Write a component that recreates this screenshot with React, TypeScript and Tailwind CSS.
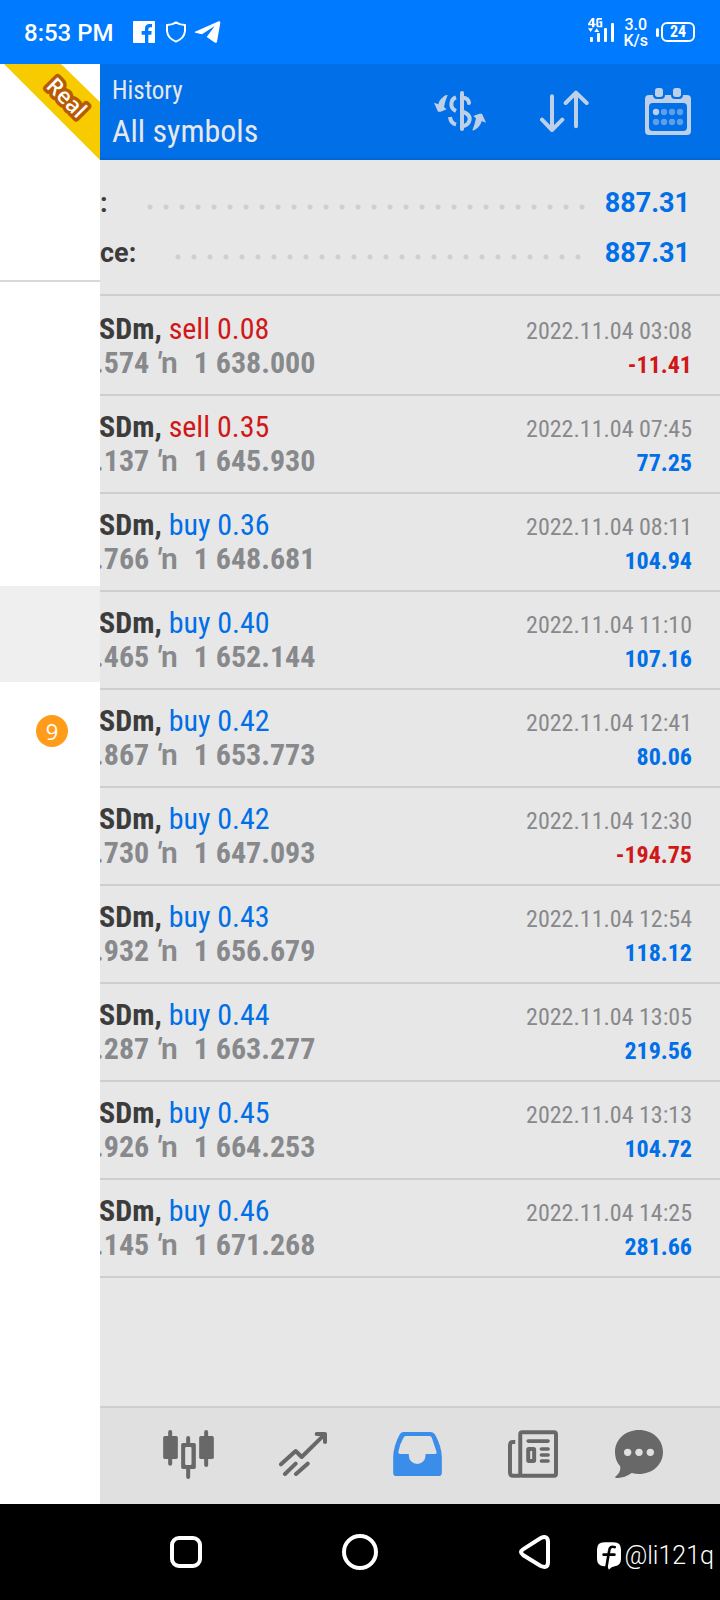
import React from "react";

type Deal = {
  side: "buy" | "sell";
  volume: string;
  open: string;
  close: string;
  time: string;
  profit: string;
};

const deals: Deal[] = [
  { side: "sell", volume: "0.08", open: ".574", close: "1 638.000", time: "2022.11.04 03:08", profit: "-11.41" },
  { side: "sell", volume: "0.35", open: ".137", close: "1 645.930", time: "2022.11.04 07:45", profit: "77.25" },
  { side: "buy", volume: "0.36", open: ".766", close: "1 648.681", time: "2022.11.04 08:11", profit: "104.94" },
  { side: "buy", volume: "0.40", open: ".465", close: "1 652.144", time: "2022.11.04 11:10", profit: "107.16" },
  { side: "buy", volume: "0.42", open: ".867", close: "1 653.773", time: "2022.11.04 12:41", profit: "80.06" },
  { side: "buy", volume: "0.42", open: ".730", close: "1 647.093", time: "2022.11.04 12:30", profit: "-194.75" },
  { side: "buy", volume: "0.43", open: ".932", close: "1 656.679", time: "2022.11.04 12:54", profit: "118.12" },
  { side: "buy", volume: "0.44", open: ".287", close: "1 663.277", time: "2022.11.04 13:05", profit: "219.56" },
  { side: "buy", volume: "0.45", open: ".926", close: "1 664.253", time: "2022.11.04 13:13", profit: "104.72" },
  { side: "buy", volume: "0.46", open: ".145", close: "1 671.268", time: "2022.11.04 14:25", profit: "281.66" },
];

function StatusBar() {
  return (
    <div className="flex h-16 items-center bg-[#007aff] pr-[25px] pl-6 text-white">
      <span className="pt-px text-2xl font-medium">8:53 PM</span>
      <svg className="ml-[19px] h-[22px] w-[22px]" viewBox="0 0 66 66" aria-hidden="true">
        <rect width="66" height="66" rx="2" fill="#fff" />
        <path d="M36 66V41H26V30H36V23Q36 9 50 9H57V19H52Q46 19 46 25V30H56L55 41H46V66Z" fill="#007aff" />
      </svg>
      <svg className="ml-[11px] h-[22px] w-5" viewBox="0 0 60 66" fill="none" stroke="#fff" strokeWidth="6" aria-hidden="true">
        <path d="M30 4Q42 12 57 12V30Q55 52 30 62Q5 52 3 30V12Q18 12 30 4Z" strokeLinejoin="round" />
      </svg>
      <svg className="ml-2 h-6 w-[27px]" viewBox="0 0 81 72" fill="#fff" aria-hidden="true">
        <path d="M3 35L74 4Q79 2 79 8L69 65Q67 71 61 67L38 51L62 18L24 43L4 38Q0 37 3 35Z" />
      </svg>
      <div className="ml-auto flex items-center">
        <svg className="mb-1 h-6 w-[27px]" viewBox="0 0 81 72" fill="#fff" aria-label="4G signal">
          <path d="M12 0H19V17H23V22H19V28H12V22H0V17ZM12 8L6 17H12Z" fillRule="evenodd" />
          <path d="M28 0H42V5H31V23H37V15H34V10H43V28H28L25 24V4Z" />
          <path d="M0 31H15L8 42ZM19 42H34L26 31Z" />
          <rect x="6" y="57" width="9" height="15" rx="3" />
          <rect x="27" y="45" width="9" height="27" rx="3" />
          <rect x="48" y="30" width="9" height="42" rx="3" />
          <rect x="69" y="15" width="9" height="57" rx="3" />
        </svg>
        <div className="ml-2 pt-px text-center text-base leading-4 font-medium">
          <div>3.0</div>
          <div>K/s</div>
        </div>
        <span className="ml-2 h-[9px] w-[3px] rounded-sm bg-white" />
        <span className="ml-[2px] flex h-5 w-[34px] items-center justify-center rounded-[6px] border-2 border-white font-['Roboto_Condensed',Roboto,sans-serif] text-base leading-none font-bold">
          24
        </span>
      </div>
    </div>
  );
}

function Drawer() {
  return (
    <aside className="w-[100px] shrink-0 bg-white">
      <div className="h-[218px] border-b-2 border-[#d8d8d8]">
        <svg className="h-24 w-[100px]" viewBox="0 0 100 96">
          <path d="M4 0H61L100 38V96Z" fill="#f8cb00" />
          <text
            transform="translate(45 23) rotate(45)"
            className="font-['Open_Sans','Noto_Sans',sans-serif] text-[22px] font-semibold [paint-order:stroke]"
            fill="#fff"
            stroke="#b85a00"
            strokeWidth="7"
            strokeLinejoin="round"
          >
            Real
          </text>
        </svg>
      </div>
      <nav className="pt-4">
        <div className="h-24" />
        <div className="h-24" />
        <div className="h-24" />
        <div className="h-24 bg-[#efefef]" />
        <div className="flex h-24 items-center justify-end pt-0.5 pr-8">
          <span className="flex h-8 w-8 items-center justify-center rounded-full bg-[#ff9c1a] font-['Open_Sans','Noto_Sans',sans-serif] text-[22px] leading-none font-medium text-white">
            9
          </span>
        </div>
      </nav>
    </aside>
  );
}

function CurrencyIcon() {
  const arrow = "M0 35L12 62H20L38 55L30 48Q34 28 41 12Q35 11 30 16Q15 27 13 40Z";
  return (
    <svg className="h-10 w-[52px]" viewBox="0 0 156 120" aria-hidden="true">
      <g fill="#bdd0e8">
        <path d={arrow} />
        <path d={arrow} transform="rotate(180 78 65)" />
      </g>
      <g fill="none" stroke="#bdd0e8" strokeWidth="12">
        <path d="M84 6V114" strokeLinecap="round" />
        <path d="M66 19Q52 24 52 40Q52 54 66 60" />
        <path d="M48 78Q50 96 66 101" />
        <path d="M88 20Q104 22 105 36" strokeLinecap="round" />
        <path d="M88 63Q108 70 107 86Q104 102 88 105" />
      </g>
    </svg>
  );
}

function SortIcon() {
  return (
    <svg className="h-[43px] w-[49px]" viewBox="0 0 147 129" fill="none" stroke="#bdd0e8" strokeWidth="12" strokeLinecap="round" strokeLinejoin="round" aria-hidden="true">
      <path d="M36 19V120M6 89L36 120L67 89M108 8V109M77 39L108 8L140 39" />
    </svg>
  );
}

function CalendarIcon() {
  return (
    <svg className="h-[47px] w-[46px]" viewBox="0 0 138 141" fill="#bdd0e8" aria-hidden="true">
      <rect y="21" width="138" height="120" rx="12" />
      <rect x="24" y="-6" width="36" height="39" rx="12" fill="#006fe8" />
      <rect x="78" y="-6" width="36" height="39" rx="12" fill="#006fe8" />
      <rect x="30" width="24" height="27" rx="8" />
      <rect x="84" width="24" height="27" rx="8" />
      <rect x="12" y="45" width="114" height="84" rx="11" fill="#006fe8" />
      <circle cx="33" cy="72" r="9.5" />
      <g fill="#5e9fe8">
        <circle cx="57" cy="72" r="9.5" />
        <circle cx="81" cy="72" r="9.5" />
        <circle cx="105" cy="72" r="9.5" />
        <circle cx="33" cy="102" r="9.5" />
        <circle cx="57" cy="102" r="9.5" />
        <circle cx="81" cy="102" r="9.5" />
        <circle cx="105" cy="102" r="9.5" />
      </g>
    </svg>
  );
}

function Header() {
  return (
    <header className="flex h-24 items-center border-b-2 border-[#0066d6] bg-[#006fe8] pl-3 text-[#e6e8ea]">
      <div className="flex-1 pt-2 whitespace-nowrap">
        <div className="text-[25px] leading-8">History</div>
        <h1 className="text-[32px] leading-[48px]">All symbols</h1>
      </div>
      <button className="flex w-26 justify-center" aria-label="Currency"><CurrencyIcon /></button>
      <button className="flex w-26 justify-center" aria-label="Sort"><SortIcon /></button>
      <button className="flex w-26 justify-center" aria-label="Period"><CalendarIcon /></button>
    </header>
  );
}

function SummaryRow({ label, value }: { label: string; value: string }) {
  return (
    <div className="flex h-[50px] items-center font-[Roboto,sans-serif] text-[27px] font-bold">
      <dt className="text-[#3c3c3c]">{label}</dt>
      <span className="mt-2 mr-4 ml-[34px] h-[6px] flex-1 bg-[radial-gradient(circle,#cfcfcf_2px,transparent_3px)] bg-[length:16px_6px] bg-repeat-x" />
      <dd className="text-[#006fe8]">{value}</dd>
    </div>
  );
}

function DealRow({ deal }: { deal: Deal }) {
  return (
    <li className="flex h-[98px] items-start justify-between border-b-2 border-[#cecece] pt-[14px] pr-7 whitespace-nowrap">
      <div className="-ml-px text-[30px] leading-[34px]">
        <div>
          <span className="font-bold text-[#3c3c3c]">SDm,</span>{" "}
          <span className={deal.side === "sell" ? "text-[#d01818]" : "text-[#006fe8]"}>
            {deal.side} {deal.volume}
          </span>
        </div>
        <div className="-ml-1 font-bold text-[#88898c]">
          {deal.open} <span className="font-[Roboto,sans-serif] font-semibold"><i>′</i>n</span>
          <span className="ml-4">{deal.close}</span>
        </div>
      </div>
      <div className="pt-0.5 text-right text-[24px] leading-[34px]">
        <div className="text-[#88898c]">{deal.time}</div>
        <div className={deal.profit.startsWith("-") ? "font-bold text-[#d01818]" : "font-bold text-[#006fe8]"}>{deal.profit}</div>
      </div>
    </li>
  );
}

function TabBar() {
  return (
    <nav className="flex h-[98px] border-t-2 border-[#cecece] bg-[#e0e0e0] pr-8 pb-1 pl-[31px]">
      <button className="flex flex-1 items-center justify-center" aria-label="Quotes">
        <svg className="h-[49px] w-[51px]" viewBox="0 0 152 147" fill="#686868" aria-hidden="true">
          <rect y="18" width="44" height="69" rx="5" />
          <rect x="15" width="12" height="107" rx="6" />
          <rect x="108" y="18" width="44" height="69" rx="5" />
          <rect x="123" width="12" height="111" rx="6" />
          <rect x="69" y="18" width="12" height="28" rx="6" />
          <rect x="69" y="112" width="12" height="35" rx="6" />
          <path d="M59 39H93Q98 39 98 44V112Q98 117 93 117H59Q54 117 54 112V44Q54 39 59 39ZM66 54V102Q66 105 69 105H82Q85 105 85 102V54Q85 51 82 51H69Q66 51 66 54Z" fillRule="evenodd" />
        </svg>
      </button>
      <button className="flex flex-1 items-center justify-center" aria-label="Charts">
        <svg className="h-[44px] w-12" viewBox="0 0 144 132" fill="none" stroke="#686868" strokeWidth="12" strokeLinecap="round" strokeLinejoin="round" aria-hidden="true">
          <path d="M6 97L50 57L68 75L137 7M113 6H138V30M18 126L50 95M51 126L86 95" />
        </svg>
      </button>
      <button className="flex flex-1 items-center justify-center" aria-label="History">
        <svg className="h-[44px] w-[49px]" viewBox="0 0 146 132" fill="#3a8eea" aria-hidden="true">
          <path fillRule="evenodd" d="M30 0H113Q121 0 126 8Q145 42 146 75V122Q146 132 136 132H10Q0 132 0 122V75Q1 42 19 8Q23 0 30 0ZM38 12Q33 12 31 17Q19 38 16 58Q14 66 21 66H47V71A25 25 0 0 0 97 71V66H124Q132 66 130 59L116 17Q114 12 109 12Z" />
        </svg>
      </button>
      <button className="flex flex-1 items-center justify-center" aria-label="News">
        <svg className="h-12 w-[50px]" viewBox="0 0 151 144" fill="none" stroke="#686868" strokeWidth="12" strokeLinecap="round" aria-hidden="true">
          <rect x="37" y="6" width="108" height="132" rx="6" />
          <path d="M22 36H15Q6 36 6 45V128Q6 138 15 138H37" strokeLinecap="butt" />
          <path d="M61 33H121M101 57H121M101 75H121M101 93H121" strokeWidth="11" />
          <rect x="61" y="57" width="18" height="36" rx="2" />
        </svg>
      </button>
      <button className="flex w-[98px] items-center justify-center" aria-label="Messages">
        <svg className="h-12 w-12" viewBox="0 0 144 144" aria-hidden="true">
          <path d="M72 0C112 0 144 28 144 66S112 132 72 132Q62 132 50 129Q24 147 1 143Q0 142 1 140Q20 125 15 108Q0 92 0 66C0 28 32 0 72 0Z" fill="#686868" />
          <g fill="#e0e0e0">
            <circle cx="38" cy="67" r="11" />
            <circle cx="72" cy="67" r="11" />
            <circle cx="106" cy="67" r="11" />
          </g>
        </svg>
      </button>
    </nav>
  );
}

function SystemNav() {
  return (
    <div className="relative flex h-24 bg-black px-[99px]">
      <button className="flex flex-1 items-center justify-center" aria-label="Recent apps">
        <span className="h-8 w-8 rounded-[9px] border-4 border-white" />
      </button>
      <button className="flex flex-1 items-center justify-center" aria-label="Home">
        <span className="h-9 w-9 rounded-full border-4 border-white" />
      </button>
      <button className="flex flex-1 items-center justify-center" aria-label="Back">
        <svg className="h-[34px] w-[31px]" viewBox="0 0 93 102" fill="none" stroke="#fff" strokeWidth="12" aria-hidden="true">
          <path d="M12 43L64 10Q86 -1 87 20V82Q86 103 64 92L12 60Q0 51 12 43Z" />
        </svg>
      </button>
      <div className="absolute right-1.5 bottom-6 flex items-center text-white">
        <svg className="mr-[3px] h-7 w-6" viewBox="0 0 73 84" aria-hidden="true">
          <path d="M22 0H51Q73 0 73 22V50Q73 70 54 73Q44 74 36 84L32 73H22Q0 72 0 50V22Q0 0 22 0Z" fill="#fff" />
          <path d="M54 15Q39 10 37 26L29 74M20 38H53" fill="none" stroke="#000" strokeWidth="8" strokeLinecap="round" />
        </svg>
        <span className="font-[Roboto,sans-serif] text-[25px] leading-10 font-light">@li121q</span>
      </div>
    </div>
  );
}

export default function App() {
  return (
    <div className="flex min-h-screen flex-col font-[Roboto,sans-serif]">
      <StatusBar />
      <div className="flex flex-1">
        <Drawer />
        <main className="flex min-w-0 flex-1 flex-col overflow-hidden bg-[#e7e7e7] font-['Roboto_Condensed','Liberation_Sans_Narrow',sans-serif]">
          <Header />
          <dl className="h-[136px] border-b-2 border-[#cecece] pt-[18px] pr-[30px]">
            <SummaryRow label=":" value="887.31" />
            <SummaryRow label="ce:" value="887.31" />
          </dl>
          <ul className="pt-0.5">
            {deals.map((deal) => (
              <DealRow key={deal.time} deal={deal} />
            ))}
          </ul>
          <div className="flex-1" />
          <TabBar />
        </main>
      </div>
      <SystemNav />
    </div>
  );
}
